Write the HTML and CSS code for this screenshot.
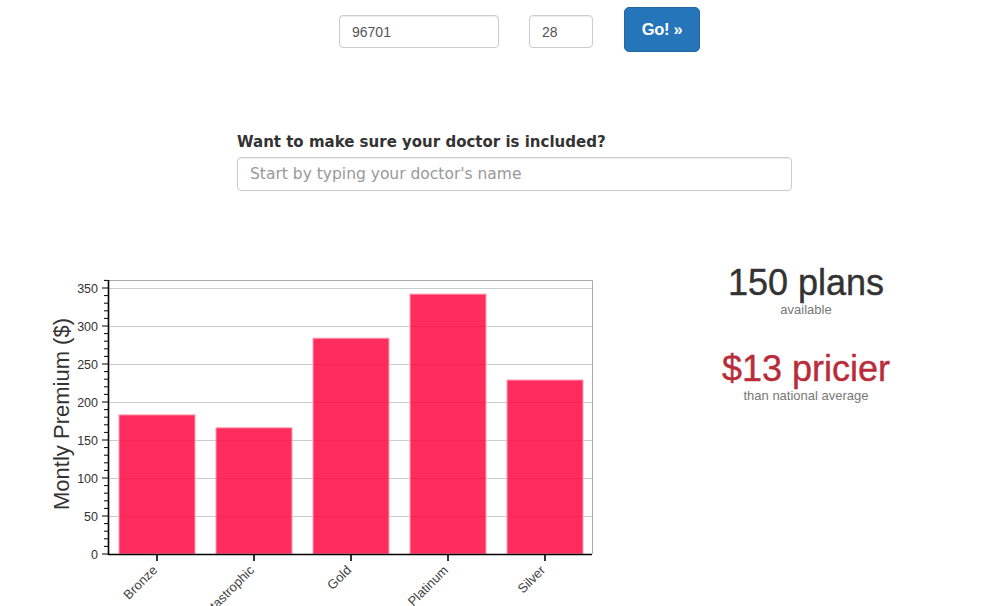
FILE: index.html
```html
<!DOCTYPE html>
<html lang="en">
<head>
<meta charset="utf-8">
<title>Plans</title>
<link rel="stylesheet" href="styles.css">
</head>
<body>
<form class="search">
  <input class="field zip" type="text" value="96701">
  <input class="field age" type="text" value="28">
  <button class="go" type="button">Go! &raquo;</button>
</form>

<section class="doctor">
  <label class="doctor-label" for="doc">Want to make sure your doctor is included?</label>
  <input id="doc" class="doctor-input" type="text" placeholder="Start by typing your doctor's name">
</section>

<section class="results">
  <svg class="chart" width="626" height="346" viewBox="0 0 626 346">
    <g class="grid" stroke="#cccccc" stroke-width="1">
      <path d="M109 256.5H592M109 218.5H592M109 180.5H592M109 142.5H592M109 104.5H592M109 66.5H592M109 28.5H592"/>
    </g>
    <path d="M108.5 20.5H592.5V294" fill="none" stroke="#aaaaaa" stroke-width="1"/>
    <g class="bars" fill="rgb(255,5,63)" fill-opacity="0.84" stroke="#ff9fb4" stroke-width="1">
      <rect x="119" y="154.9" width="76" height="139.1"/>
      <rect x="216" y="167.8" width="76" height="126.2"/>
      <rect x="313" y="78.2" width="76" height="215.8"/>
      <rect x="410" y="34.1" width="76" height="259.9"/>
      <rect x="507" y="120" width="76" height="174"/>
    </g>
    <g class="axis" stroke="#000" fill="none">
      <path d="M108.5 20V294.5H592" stroke-width="1.6"/>
      <path stroke-width="1" d="M102 294h6M102 256h6M102 218h6M102 180h6M102 142h6M102 104h6M102 66h6M102 28h6"/>
      <path stroke-width="1" d="M104 286.4h4M104 278.8h4M104 271.2h4M104 263.6h4M104 248.4h4M104 240.8h4M104 233.2h4M104 225.6h4M104 210.4h4M104 202.8h4M104 195.2h4M104 187.6h4M104 172.4h4M104 164.8h4M104 157.2h4M104 149.6h4M104 134.4h4M104 126.8h4M104 119.2h4M104 111.6h4M104 96.4h4M104 88.8h4M104 81.2h4M104 73.6h4M104 58.4h4M104 50.8h4M104 43.2h4M104 35.6h4M104 20.4h4"/>
      <path stroke-width="1.6" d="M157 295v6M254 295v6M351 295v6M448 295v6M545 295v6"/>
    </g>
    <g class="ylabels" text-anchor="end">
      <text x="98" y="298.5">0</text>
      <text x="98" y="260.5">50</text>
      <text x="98" y="222.5">100</text>
      <text x="98" y="184.5">150</text>
      <text x="98" y="146.5">200</text>
      <text x="98" y="108.5">250</text>
      <text x="98" y="70.5">300</text>
      <text x="98" y="32.5">350</text>
    </g>
    <g class="xlabels" text-anchor="end">
      <text transform="translate(158 311) rotate(-45)">Bronze</text>
      <text transform="translate(255 311) rotate(-45)">Catastrophic</text>
      <text transform="translate(352 311) rotate(-45)">Gold</text>
      <text transform="translate(449 311) rotate(-45)">Platinum</text>
      <text transform="translate(546 311) rotate(-45)">Silver</text>
    </g>
    <text class="ytitle" text-anchor="middle" transform="translate(69 154) rotate(-90)">Montly Premium ($)</text>
  </svg>

  <div class="stats">
    <div class="big">150 plans</div>
    <div class="sub">available</div>
    <div class="big red">$13 pricier</div>
    <div class="sub">than national average</div>
  </div>
</section>
</body>
</html>
```

FILE: styles.css
```css
html, body {
  margin: 0;
  padding: 0;
  overflow: hidden;
  background: #ffffff;
}

body {
  font-family: "Liberation Sans", Arial, sans-serif;
  color: #333333;
}

.search {
  display: flex;
  align-items: flex-start;
  margin: 0;
  padding: 7px 0 0 339px;
}

.field {
  box-sizing: border-box;
  height: 33px;
  margin-top: 8px;
  padding: 0 12px;
  border: 1px solid #cccccc;
  border-radius: 4px;
  box-shadow: inset 0 1px 1px rgba(0, 0, 0, 0.075);
  font-family: "Liberation Sans", Arial, sans-serif;
  font-size: 14px;
  color: #555555;
  background: #fff;
}

.zip { width: 160px; }
.age { width: 64px; margin-left: 30px; }

.go {
  box-sizing: border-box;
  width: 76px;
  height: 45px;
  margin-left: 31px;
  padding: 0;
  border: 1px solid #22689f;
  border-radius: 5px;
  background: #2575ba;
  color: #ffffff;
  font-family: "Liberation Sans", Arial, sans-serif;
  font-weight: bold;
  font-size: 16.5px;
  letter-spacing: -0.3px;
}

.doctor {
  display: flex;
  flex-direction: column;
  width: 555px;
  margin: 80px 0 0 237px;
}

.doctor-label {
  font-family: "DejaVu Sans", Verdana, sans-serif;
  font-weight: bold;
  font-size: 15px;
  line-height: 20px;
  color: #333333;
}

.doctor-input {
  box-sizing: border-box;
  height: 34px;
  margin-top: 5px;
  padding: 0 12px;
  border: 1px solid #cccccc;
  border-radius: 4px;
  box-shadow: inset 0 1px 1px rgba(0, 0, 0, 0.075);
  font-family: "DejaVu Sans", Verdana, sans-serif;
  font-size: 15.5px;
  color: #555;
}

.doctor-input::placeholder {
  color: #999999;
}

.results {
  display: flex;
  margin-top: 69px;
  height: 346px;
}

.chart {
  display: block;
  flex: 0 0 626px;
}

.ylabels text {
  font-family: "Liberation Sans", Arial, sans-serif;
  font-size: 12.5px;
  fill: #333333;
}

.xlabels text {
  font-family: "Liberation Sans", Arial, sans-serif;
  font-size: 13px;
  fill: #444444;
}

.ytitle {
  font-family: "Liberation Sans", Arial, sans-serif;
  font-size: 22px;
  fill: #333333;
}

.stats {
  width: 360px;
  padding-top: 4.5px;
  text-align: center;
}

.big {
  font-size: 36px;
  line-height: 36px;
  color: #333333;
  -webkit-text-stroke: 0.4px currentColor;
}

.big.red {
  margin-top: 32px;
  color: #b92c3a;
}

.sub {
  font-size: 13px;
  line-height: 18px;
  color: #777777;
}
```
